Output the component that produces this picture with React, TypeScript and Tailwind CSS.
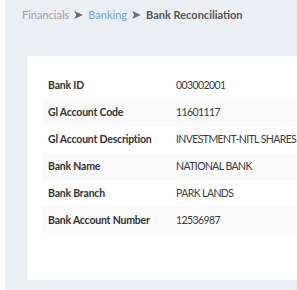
import React from 'react'

const rows = [
  { label: 'Bank ID', value: '003002001' },
  { label: 'Gl Account Code', value: '11601117' },
  { label: 'Gl Account Description', value: 'INVESTMENT-NITL SHARES' },
  { label: 'Bank Name', value: 'NATIONAL BANK' },
  { label: 'Bank Branch', value: 'PARK LANDS' },
  { label: 'Bank Account Number', value: '12536987' },
]

function Arrow() {
  return (
    <svg width="9" height="8" viewBox="0 0 10 9" className="mx-[5px]">
      <path d="M0 0 L10 4.5 L0 9 L2.5 4.5 Z" fill="#6b6b6b" />
    </svg>
  )
}

export default function App() {
  return (
    <div
      className="flex w-[297px] h-[290px] overflow-hidden bg-white"
      style={{ fontFamily: 'Lato, "Open Sans", sans-serif' }}
    >
      <div className="w-[5px] shrink-0 bg-white" />
      <div className="flex-1 bg-[#ebeef3] flex flex-col min-w-0">
        {/* Breadcrumb */}
        <div className="flex items-center h-[30px] pl-[17px] text-[11px] whitespace-nowrap">
          <span className="text-[#a0a0a0]">Financials</span>
          <Arrow />
          <span className="text-[#72a3d4]">Banking</span>
          <Arrow />
          <span className="font-bold text-[#555]">Bank Reconciliation</span>
        </div>

        {/* Panel */}
        <div className="mt-[26px] ml-[22px] h-[224px] w-[400px] bg-white pt-[16px] pl-[15px]">
          {rows.map((row, idx) => (
            <div
              key={idx}
              className={`flex items-center h-[27px] text-[10.5px] text-[#333] whitespace-nowrap ${
                idx % 2 === 1 ? 'bg-[#f9f9f9]' : ''
              }`}
            >
              <span className="w-[134px] pl-[6px] font-bold tracking-[-0.2px]">{row.label}</span>
              <span className="text-[#3a3a3a] tracking-[-0.6px]">{row.value}</span>
            </div>
          ))}
        </div>
      </div>
    </div>
  )
}
